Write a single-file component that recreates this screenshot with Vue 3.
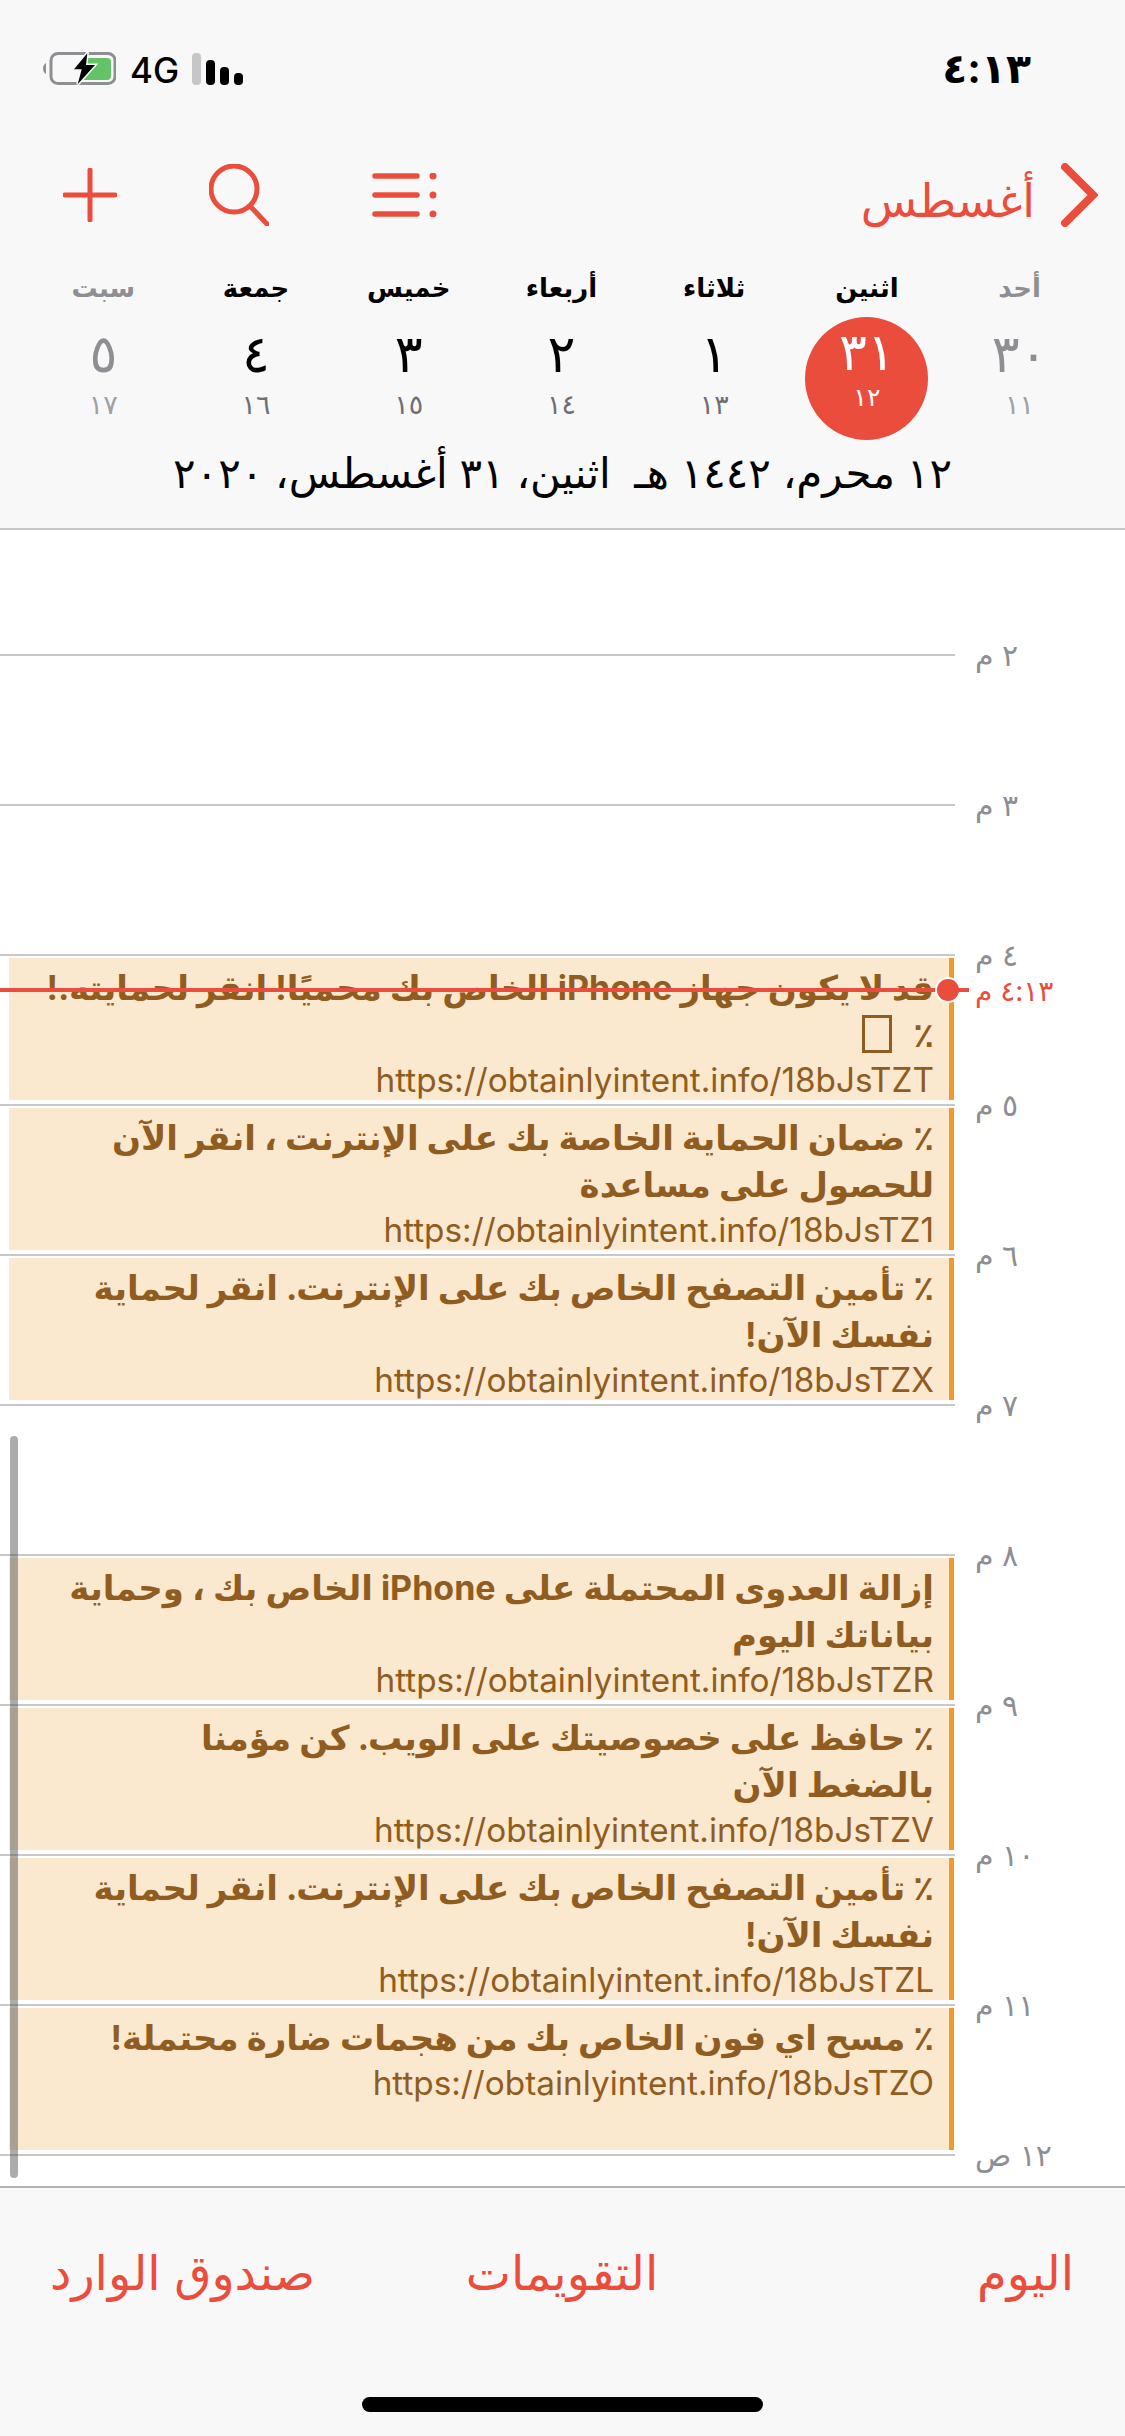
<template>
  <div class="screen">
    <header class="top">
      <div class="status">
        <div class="status-left">
          <svg class="battery" viewBox="0 0 73 33" fill="none">
            <path d="M3 11 Q0 13 0 16.5 Q0 20 3 22 Z" fill="#8e8e93" />
            <rect x="8" y="1.5" width="64" height="30" rx="7" stroke="#8e8e93" stroke-width="3" />
            <path d="M45 6H64Q68 6 68 10V24Q68 28 64 28H36Z" fill="#62c466" />
            <path d="M44.3 1.3L31 17.3H38.7L34.7 32.3L52 13H43Z" fill="#000" stroke="#f8f8f8" stroke-width="3" paint-order="stroke" />
          </svg>
          <span class="net">4G</span>
          <div class="signal">
            <i class="off"></i><i class="b1"></i><i class="b2"></i><i class="b3"></i>
          </div>
        </div>
        <span class="clock">٤:١٣</span>
      </div>

      <div class="nav">
        <div class="tools">
          <svg class="ico-plus" viewBox="0 0 54 54" fill="none" stroke="#eb4d3d" stroke-width="5" stroke-linecap="round">
            <path d="M27 2V52M2 27H52" />
          </svg>
          <svg class="ico-search" viewBox="0 0 60 62" fill="none" stroke="#eb4d3d" stroke-width="5" stroke-linecap="round">
            <circle cx="25" cy="25" r="23" />
            <path d="M41 42L58 60" />
          </svg>
          <svg class="ico-list" viewBox="0 0 66 44" fill="#eb4d3d" stroke="#eb4d3d" stroke-linecap="round">
            <path d="M3 3H45M3 22H45M3 41H45" stroke-width="5.5" fill="none" />
            <circle cx="61" cy="3" r="3.5" stroke="none" />
            <circle cx="61" cy="22" r="3.5" stroke="none" />
            <circle cx="61" cy="41" r="3.5" stroke="none" />
          </svg>
        </div>
        <div class="month">
          <span>أغسطس</span>
          <svg class="ico-back" viewBox="0 0 38 64" fill="none" stroke="#eb4d3d" stroke-width="8" stroke-linecap="round" stroke-linejoin="miter">
            <path d="M5 4L33 32L5 60" />
          </svg>
        </div>
      </div>

      <div class="week">
        <div v-for="d in days" :key="d.name" class="day" :class="{ muted: d.muted, today: d.today }">
          <span class="day-name">{{ d.name }}</span>
          <div class="day-num">
            <span class="num">{{ d.num }}</span>
            <span class="hijri">{{ d.hijri }}</span>
          </div>
        </div>
      </div>

      <div class="full-date">١٢ محرم، ١٤٤٢ هـ&nbsp;&nbsp;اثنين، ٣١ أغسطس، ٢٠٢٠</div>
    </header>

    <main class="timeline">
      <div v-for="row in rows" :key="row.label" class="hour">
        <div class="track">
          <div v-if="row.event" class="event">
            <div v-for="(line, i) in row.event.lines" :key="i" class="ev-title">{{ line }}<span v-if="row.event.tofu && i === 1" class="tofu"></span></div>
            <div class="ev-url">{{ row.event.url }}</div>
          </div>
        </div>
        <span class="hour-label">{{ row.label }}</span>
      </div>

      <div class="now">
        <div class="now-line"></div>
        <div class="now-dot"></div>
        <div class="now-dash"></div>
        <span class="now-label">٤:١٣ م</span>
      </div>
      <div class="scrollbar"></div>
    </main>

    <footer class="tabs">
      <div class="tab-row">
        <span class="tab-a">صندوق الوارد</span>
        <span>التقويمات</span>
        <span class="tab-c">اليوم</span>
      </div>
      <div class="home-bar"></div>
    </footer>
  </div>
</template>

<script setup>
const days = [
  { name: 'سبت', num: '٥', hijri: '١٧', muted: true },
  { name: 'جمعة', num: '٤', hijri: '١٦' },
  { name: 'خميس', num: '٣', hijri: '١٥' },
  { name: 'أربعاء', num: '٢', hijri: '١٤' },
  { name: 'ثلاثاء', num: '١', hijri: '١٣' },
  { name: 'اثنين', num: '٣١', hijri: '١٢', today: true },
  { name: 'أحد', num: '٣٠', hijri: '١١', muted: true }
]

const rows = [
  { label: '٢ م' },
  { label: '٣ م' },
  {
    label: '٤ م',
    event: {
      lines: ['قد لا يكون جهاز iPhone الخاص بك محميًا! انقر لحمايته.!', '٪ '],
      url: 'https://obtainlyintent.info/18bJsTZT',
      tofu: true
    }
  },
  {
    label: '٥ م',
    event: {
      lines: ['٪ ضمان الحماية الخاصة بك على الإنترنت ، انقر الآن', 'للحصول على مساعدة'],
      url: 'https://obtainlyintent.info/18bJsTZ1'
    }
  },
  {
    label: '٦ م',
    event: {
      lines: ['٪ تأمين التصفح الخاص بك على الإنترنت. انقر لحماية', 'نفسك الآن!'],
      url: 'https://obtainlyintent.info/18bJsTZX'
    }
  },
  { label: '٧ م' },
  {
    label: '٨ م',
    event: {
      lines: ['إزالة العدوى المحتملة على iPhone الخاص بك ، وحماية', 'بياناتك اليوم'],
      url: 'https://obtainlyintent.info/18bJsTZR'
    }
  },
  {
    label: '٩ م',
    event: {
      lines: ['٪ حافظ على خصوصيتك على الويب. كن مؤمنا', 'بالضغط الآن'],
      url: 'https://obtainlyintent.info/18bJsTZV'
    }
  },
  {
    label: '١٠ م',
    event: {
      lines: ['٪ تأمين التصفح الخاص بك على الإنترنت. انقر لحماية', 'نفسك الآن!'],
      url: 'https://obtainlyintent.info/18bJsTZL'
    }
  },
  {
    label: '١١ م',
    event: {
      lines: ['٪ مسح اي فون الخاص بك من هجمات ضارة محتملة!'],
      url: 'https://obtainlyintent.info/18bJsTZO'
    }
  },
  { label: '١٢ ص' }
]
</script>

<style>
html,
body {
  margin: 0;
  background: #fff;
}
</style>

<style scoped>
.screen {
  width: 1125px;
  height: 2436px;
  display: flex;
  flex-direction: column;
  overflow: hidden;
  font-family: Inter, "DejaVu Sans", sans-serif;
  color: #000;
  background: #fff;
}

.top {
  height: 530px;
  box-sizing: border-box;
  flex: none;
  background: #f8f8f8;
  border-bottom: 2px solid #c8c8ca;
  display: flex;
  flex-direction: column;
}

.status {
  height: 33px;
  margin-top: 52px;
  padding: 0 94px 0 43px;
  display: flex;
  justify-content: space-between;
  align-items: center;
}

.status-left {
  display: flex;
  align-items: center;
  gap: 14px;
}

.battery {
  width: 73px;
  height: 33px;
}

.net {
  font-size: 35px;
  font-weight: 500;
  line-height: 33px;
  margin-top: 3px;
}

.signal {
  display: flex;
  align-items: flex-end;
  gap: 5px;
  height: 32px;
  margin-left: -1px;
}

.signal i {
  display: block;
  width: 9px;
  border-radius: 4px;
  background: #000;
}

.signal .off { height: 32px; background: #c6c6c8; }
.signal .b1 { height: 25px; }
.signal .b2 { height: 18px; }
.signal .b3 { height: 12px; }

.clock {
  font-size: 41px;
  font-weight: 700;
  line-height: 33px;
}

.nav {
  height: 64px;
  margin-top: 78px;
  padding: 0 27px 0 63px;
  display: flex;
  justify-content: space-between;
  align-items: center;
}

.tools {
  display: flex;
  align-items: center;
}

.ico-plus {
  width: 54px;
  height: 54px;
}

.ico-search {
  width: 60px;
  height: 62px;
  margin-left: 92px;
}

.ico-list {
  width: 66px;
  height: 44px;
  margin-left: 103px;
}

.month {
  display: flex;
  align-items: center;
  gap: 25px;
  color: #eb4d3d;
  font-size: 46px;
}

.month span {
  margin-top: 10px;
}

.ico-back {
  width: 38px;
  height: 64px;
}

.week {
  margin-top: 40px;
  padding: 0 29px 0 27px;
  display: grid;
  grid-template-columns: repeat(7, 1fr);
}

.day {
  display: flex;
  flex-direction: column;
  align-items: center;
}

.day-name {
  height: 42px;
  line-height: 42px;
  font-size: 26px;
  font-weight: 700;
}

.day-num {
  width: 123px;
  height: 123px;
  margin-top: 8px;
  border-radius: 50%;
  display: flex;
  flex-direction: column;
  align-items: center;
  justify-content: flex-start;
}

.num {
  height: 74px;
  line-height: 74px;
  font-size: 52px;
}

.hijri {
  height: 28px;
  line-height: 28px;
  font-size: 27px;
  color: #6f6f73;
}

.muted .day-name,
.muted .num {
  color: #8e8e93;
}

.muted .hijri {
  color: #a0a0a4;
}

.today .day-num {
  background: #eb4d3d;
  color: #fff;
}

.today .num {
  height: 70px;
  line-height: 70px;
}

.today .hijri {
  margin-top: -4px;
  font-size: 25px;
  color: #fff;
}

.full-date {
  margin-top: 5px;
  direction: rtl;
  text-align: center;
  font-size: 42px;
  line-height: 56px;
  white-space: nowrap;
}

.timeline {
  position: relative;
  flex: 1;
  min-height: 0;
  padding-top: 124px;
  overflow: hidden;
}

.hour {
  height: 150px;
  display: flex;
}

.track {
  width: 955px;
  box-sizing: border-box;
  border-top: 2px solid #c8c8ca;
  padding: 2px 1px 2px 9px;
}

.event {
  height: 142px;
  box-sizing: border-box;
  padding: 6px 15px 0 0;
  background: #fae8cf;
  border-right: 5px solid #f0992f;
  color: #905c20;
  direction: rtl;
  overflow: hidden;
}

.ev-title {
  font-size: 34px;
  font-weight: 700;
  line-height: 47px;
  white-space: nowrap;
}

.ev-url {
  font-size: 33.3px;
  line-height: 44px;
  direction: ltr;
  text-align: right;
  white-space: nowrap;
}

.tofu {
  display: inline-block;
  width: 30px;
  height: 38px;
  margin-right: 13px;
  box-sizing: border-box;
  border: 3px solid #905c20;
  vertical-align: -6px;
}

.hour-label {
  margin: -17px 0 0 20px;
  direction: rtl;
  font-size: 30px;
  line-height: 36px;
  color: #8e8e93;
  white-space: nowrap;
}

.now {
  position: absolute;
  left: 0;
  top: 458px;
  width: 1125px;
  height: 4px;
}

.now-line {
  position: absolute;
  left: 0;
  top: 0;
  width: 938px;
  height: 4px;
  background: #eb4d3d;
}

.now-dot {
  position: absolute;
  left: 935px;
  top: -11px;
  width: 22px;
  height: 22px;
  box-sizing: content-box;
  border: 2px solid #fff;
  border-radius: 50%;
  background: #eb4d3d;
}

.now-dash {
  position: absolute;
  left: 958px;
  top: 0;
  width: 11px;
  height: 4px;
  background: #eb4d3d;
}

.now-label {
  position: absolute;
  left: 975px;
  top: -15px;
  direction: rtl;
  font-size: 28px;
  line-height: 36px;
  color: #eb4d3d;
  white-space: nowrap;
}

.scrollbar {
  position: absolute;
  left: 10px;
  top: 906px;
  width: 8px;
  height: 742px;
  border-radius: 4px;
  background: rgba(70, 70, 70, 0.45);
}

.tabs {
  height: 250px;
  flex: none;
  box-sizing: border-box;
  background: #f8f8f8;
  border-top: 2px solid #b2b2b2;
  display: flex;
  flex-direction: column;
  align-items: center;
}

.tab-row {
  width: 100%;
  box-sizing: border-box;
  height: 80px;
  margin-top: 44px;
  padding: 0 51px 0 50px;
  display: grid;
  grid-template-columns: 1fr auto 1fr;
  align-items: center;
  color: #eb4d3d;
  font-size: 48px;
  direction: ltr;
}

.tab-a {
  justify-self: start;
}

.tab-c {
  justify-self: end;
}

.home-bar {
  width: 401px;
  height: 15px;
  margin-top: 85px;
  border-radius: 8px;
  background: #000;
}
</style>
